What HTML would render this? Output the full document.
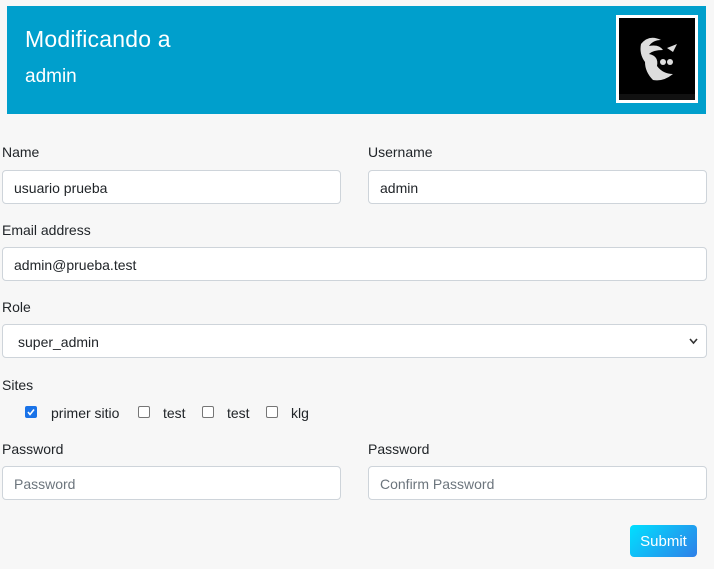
<!DOCTYPE html>
<html><head><meta charset="utf-8"><style>
body{margin:0;width:714px;height:569px;background:#f7f7f7;font-family:"Liberation Sans",sans-serif;color:#212529;position:relative;overflow:hidden}
.hdr{position:absolute;left:7px;top:6px;width:699px;height:108px;background:#009fcc;color:#fff}
.hdr h1{position:absolute;left:18px;top:20px;margin:0;font-size:23px;font-weight:normal;letter-spacing:.2px}
.hdr h2{position:absolute;left:18px;top:60px;margin:0;font-size:19px;font-weight:normal}
.av{position:absolute;left:609px;top:9px;width:76px;height:82px;border:3px solid #fff;background:#000}
.lbl{position:absolute;font-size:14px}
.in{position:absolute;border:1px solid #ced4da;border-radius:4px;background:#fff;box-sizing:border-box;height:34px;font-size:14px;padding:0 11px;line-height:34px}
.ph{color:#6c757d}
.cb{position:absolute;top:406px;width:10px;height:10px;border:1px solid #767676;border-radius:2px;background:#fff}
.ct{position:absolute;top:405px;font-size:14px}
.btn{position:absolute;left:630px;top:525px;width:67px;height:32px;border-radius:4px;background:linear-gradient(135deg,#00e0ff,#2f7fe8);color:#fff;font-size:15px;text-align:center;line-height:34px}
</style></head><body>
<div class="hdr"><h1>Modificando a</h1><h2>admin</h2>
<div class="av"><svg width="76" height="82" viewBox="0 0 76 82"><path d="M22 26 Q30 16 42 22 Q34 22 30 28 Q40 26 44 32 Q34 32 30 36 Q40 38 38 48 Q44 56 54 56 Q44 64 34 62 Q26 54 26 44 Q20 36 22 26Z" fill="#ddd"/><circle cx="44" cy="44" r="3" fill="#ddd"/><circle cx="51" cy="44" r="3" fill="#ddd"/><path d="M48 30 L58 26 L54 34Z" fill="#ddd"/><rect x="0" y="76" width="76" height="6" fill="#111"/></svg></div></div>
<div class="lbl" style="left:2px;top:144px">Name</div>
<div class="lbl" style="left:368px;top:144px">Username</div>
<div class="in" style="left:2px;top:170px;width:339px">usuario prueba</div>
<div class="in" style="left:368px;top:170px;width:339px">admin</div>
<div class="lbl" style="left:2px;top:222px">Email address</div>
<div class="in" style="left:2px;top:247px;width:705px">admin@prueba.test</div>
<div class="lbl" style="left:2px;top:299px">Role</div>
<div class="in" style="left:2px;top:324px;width:705px;padding-left:15px">super_admin<svg style="position:absolute;right:8px;top:13px" width="9" height="7" viewBox="0 0 9 7"><path d="M1 1 L4.5 5 L8 1" stroke="#333" stroke-width="1.6" fill="none"/></svg></div>
<div class="lbl" style="left:2px;top:377px">Sites</div>
<div class="cb" style="left:25px;background:#1a73e8;border-color:#1a73e8"><svg width="10" height="10" viewBox="0 0 10 10" style="display:block"><path d="M2 5 L4 7.5 L8 2.5" stroke="#fff" stroke-width="1.6" fill="none"/></svg></div>
<div class="ct" style="left:51px">primer sitio</div>
<div class="cb" style="left:138px"></div><div class="ct" style="left:163px">test</div>
<div class="cb" style="left:202px"></div><div class="ct" style="left:227px">test</div>
<div class="cb" style="left:266px"></div><div class="ct" style="left:291px">klg</div>
<div class="lbl" style="left:2px;top:441px">Password</div>
<div class="lbl" style="left:368px;top:441px">Password</div>
<div class="in ph" style="left:2px;top:466px;width:339px">Password</div>
<div class="in ph" style="left:368px;top:466px;width:339px">Confirm Password</div>
<div class="btn">Submit</div>
</body></html>
